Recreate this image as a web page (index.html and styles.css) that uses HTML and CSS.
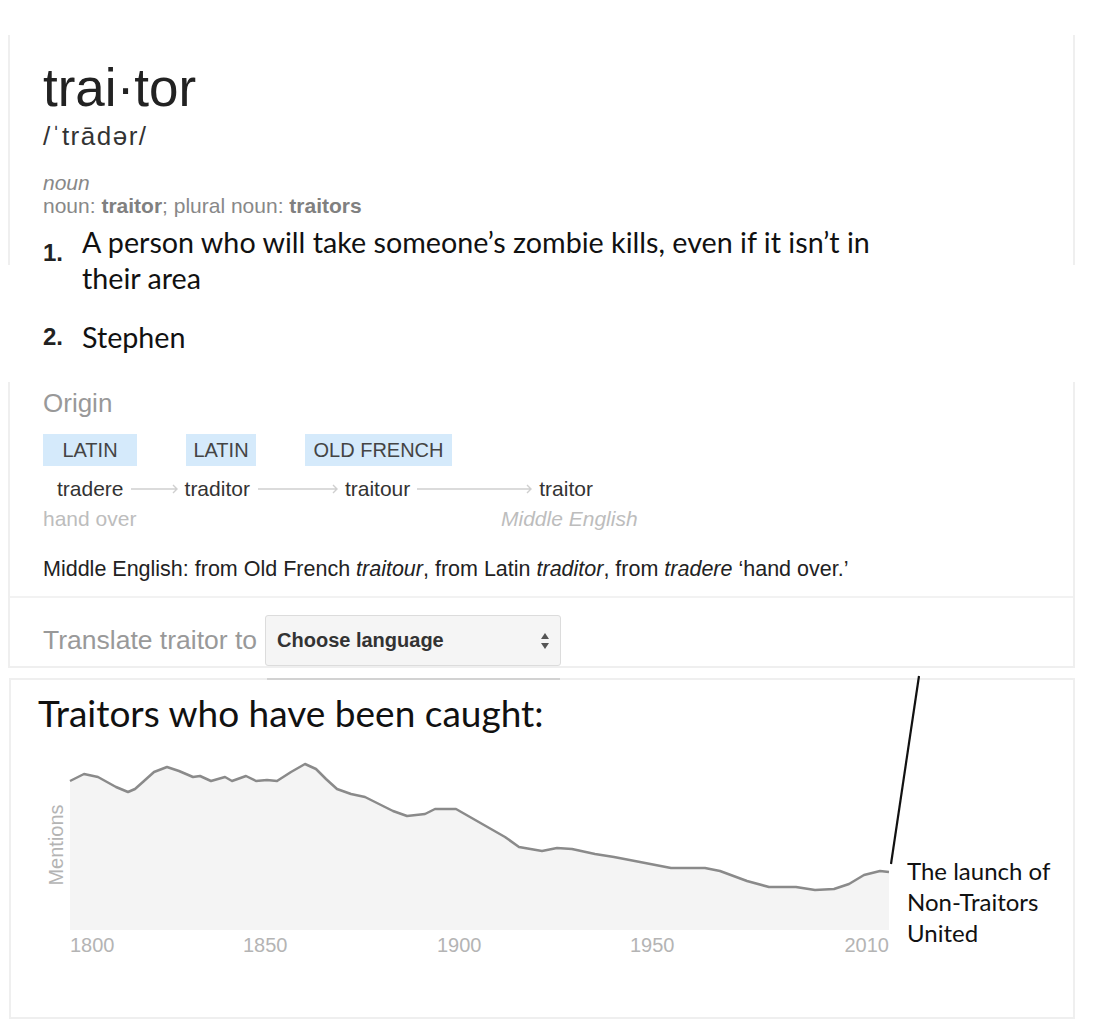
FILE: index.html
```html
<!DOCTYPE html>
<html>
    <head>
        <meta charset="utf-8">
        <title>traitor</title>
        <link rel="stylesheet" href="styles.css">
    </head>
    <body>
        <div class="page">
            <!-- Headword, pronunciation and senses -->
            <section class="entry">
                <h1 class="headword">trai·tor</h1>
                <div class="phonetic">/ˈtrādər/</div>
                <div class="pos">noun</div>
                <div class="forms">noun: <b>traitor</b>; plural noun: <b>traitors</b></div>
                <ol class="senses">
                    <li><span class="num">1.</span><span class="sense">A person who will take someone’s zombie kills, even if it isn’t in their area</span></li>
                    <li><span class="num">2.</span><span class="sense">Stephen</span></li>
                </ol>
            </section>

            <!-- Origin + translate -->
            <section class="origin-card">
                <div class="origin">
                    <h2>Origin</h2>
                    <div class="etym">
                        <span class="tag">LATIN</span>
                        <span class="tag">LATIN</span>
                        <span class="tag">OLD FRENCH</span>
                        <div class="etym-words">
                            <span class="word">tradere</span>
                            <svg class="arrow a1" viewBox="0 0 47 10"><path d="M0 5H46M42 1L46 5L42 9"/></svg>
                            <span class="word">traditor</span>
                            <svg class="arrow a2" viewBox="0 0 80 10"><path d="M0 5H79M75 1L79 5L75 9"/></svg>
                            <span class="word">traitour</span>
                            <svg class="arrow a3" viewBox="0 0 115 10"><path d="M0 5H114M110 1L114 5L110 9"/></svg>
                            <span class="word">traitor</span>
                        </div>
                        <span class="gloss">hand over</span>
                        <span class="gloss lang">Middle English</span>
                    </div>
                    <p class="etym-note">Middle English: from Old French <i>traitour</i>, from Latin <i>traditor</i>, from <i>tradere</i> ‘hand over.’</p>
                </div>
                <div class="translate">
                    <span class="translate-label">Translate traitor to</span>
                    <div class="lang-select">
                        <span>Choose language</span>
                        <svg class="updown" viewBox="0 0 10 18"><path d="M5 1L9 7H1Z"/><path d="M5 17L9 11H1Z"/></svg>
                    </div>
                </div>
            </section>

            <!-- Usage over time -->
            <section class="chart-card">
                <h2 class="chart-title">Traitors who have been caught:</h2>
                <svg class="chart" width="1062" height="240" viewBox="11 735 1062 240">
                    <path class="area" d="M70 782L84 775L98 778L116 788L128 793L135 790L144 782L154 773L167 768L179 772L193 778L200 777L211 782L225 778L232 782L246 777L256 782L267 781L277 782L291 773L305 765L316 770L326 780L337 790L351 795L365 798L379 805L393 812L407 817L425 815L435 810L456 810L470 818L491 830L505 838L519 848L542 852L557 849L572 850L595 855L614 858L640 863L671 869L705 869L720 872L747 882L769 888L796 888L815 891L834 890L849 885L864 876L880 872L889 873L889 931L70 931Z"/>
                    <path class="line" d="M70 782L84 775L98 778L116 788L128 793L135 790L144 782L154 773L167 768L179 772L193 778L200 777L211 782L225 778L232 782L246 777L256 782L267 781L277 782L291 773L305 765L316 770L326 780L337 790L351 795L365 798L379 805L393 812L407 817L425 815L435 810L456 810L470 818L491 830L505 838L519 848L542 852L557 849L572 850L595 855L614 858L640 863L671 869L705 869L720 872L747 882L769 888L796 888L815 891L834 890L849 885L864 876L880 872L889 873"/>
                    <text class="axis-title" transform="translate(63 846) rotate(-90)">Mentions</text>
                    <text class="tick" x="70" y="953">1800</text>
                    <text class="tick" x="243" y="953">1850</text>
                    <text class="tick" x="437" y="953">1900</text>
                    <text class="tick" x="630" y="953">1950</text>
                    <text class="tick end" x="889" y="953">2010</text>
                </svg>
                <svg class="callout-line" width="45" height="195" viewBox="880 675 45 195"><path d="M919 677L891 865"/></svg>
                <div class="callout">The launch of<br>Non-Traitors<br>United</div>
            </section>
        </div>
    </body>
</html>
```

FILE: styles.css
```css
body {
    margin: 0;
    background: #fff;
    font-family: "Liberation Sans", Arial, sans-serif;
    color: #222;
}

.page {
    width: 1067px;
    margin-left: 8px;
    padding-top: 35px;
}

/* top block only keeps its side rules for the first 230px */
.entry {
    padding: 26px 35px 0;
    background:
        linear-gradient(#efefef, #efefef) left top / 2px 230px no-repeat,
        linear-gradient(#efefef, #efefef) right top / 2px 230px no-repeat;
}

.headword {
    margin: 0;
    font-size: 53px;
    font-weight: 400;
    line-height: 53px;
    color: #222;
}

.phonetic {
    margin-top: 7px;
    font-size: 26px;
    line-height: 30px;
    letter-spacing: 1.5px;
    color: #333;
}

.pos {
    margin-top: 20px;
    font-size: 21px;
    line-height: 23px;
    font-style: italic;
    color: #888;
}

.forms {
    margin-top: 0;
    font-size: 21px;
    line-height: 23px;
    color: #888;
}

.forms b {
    color: #808080;
}

.senses {
    list-style: none;
    margin: 7px 0 0;
    padding: 0;
    font-family: Lato, "Open Sans", sans-serif;
    font-size: 28.7px;
    line-height: 36px;
    color: #111;
}

.senses li {
    display: flex;
}

.senses li + li {
    margin-top: 23px;
}

.num {
    flex: none;
    width: 39px;
    font-family: "Liberation Sans", Arial, sans-serif;
    font-weight: bold;
    font-size: 24px;
    color: #222;
}

.senses li:first-child .num {
    padding-top: 11px;
}

.sense {
    max-width: 815px;
}

/* Origin card */
.origin-card {
    margin-top: 27px;
    border: 2px solid #efefef;
    border-top: 0;
}

.origin {
    padding: 6px 33px 12px;
}

.origin h2 {
    margin: 0;
    font-size: 26px;
    font-weight: 400;
    line-height: 30px;
    color: #999;
}

.etym {
    display: grid;
    grid-template-columns: 94px 70px 147px 130px;
    column-gap: 49px;
    margin-top: 16px;
    font-size: 20px;
}

.tag {
    background: #d5eafb;
    text-align: center;
    line-height: 32px;
    color: #444;
}

.etym-words {
    grid-column: 1 / -1;
    display: flex;
    align-items: center;
    margin-top: 8px;
    padding-left: 14px;
    font-size: 21px;
    line-height: 30px;
    color: #333;
}

.arrow {
    height: 10px;
    margin: 0 7px;
    fill: none;
    stroke: #cfcfcf;
    stroke-width: 1.4;
}

.a1 { width: 47px; }
.a2 { width: 80px; margin-left: 8px; }
.a3 { width: 115px; }

.gloss {
    grid-row: 3;
    grid-column: 1;
    font-size: 21px;
    line-height: 30px;
    white-space: nowrap;
    color: #bdbdbd;
}

.gloss.lang {
    grid-column: 4;
    text-align: center;
    font-style: italic;
}

.etym-note {
    margin: 20px 0 0;
    font-size: 21.5px;
    line-height: 30px;
    color: #222;
}

.translate {
    display: flex;
    align-items: center;
    border-top: 2px solid #f2f2f2;
    padding: 17px 0 0 33px;
}

.translate-label {
    margin-right: 8px;
    font-size: 26.5px;
    color: #999;
}

.lang-select {
    box-sizing: border-box;
    width: 296px;
    height: 51px;
    display: flex;
    align-items: center;
    justify-content: space-between;
    padding: 0 10px 0 11px;
    background: #f5f5f5;
    border: 1px solid #dcdcdc;
    border-radius: 3px;
    font-size: 20px;
    font-weight: bold;
    color: #333;
}

.updown {
    width: 10px;
    height: 18px;
    fill: #555;
}

/* Chart card */
.chart-card {
    position: relative;
    box-sizing: border-box;
    height: 341px;
    margin: 10px 0 0 1px;
    padding-top: 2px;
    border: 2px solid #efefef;
    border-top: 0;
    background: linear-gradient(to right, #efefef 256px, #d2d2d2 256px 549px, #efefef 549px) 0 0 / 100% 2px no-repeat;
}

.chart-title {
    margin: 13px 0 1px;
    padding-left: 27px;
    font-family: Lato, "Open Sans", sans-serif;
    font-size: 37px;
    font-weight: 400;
    line-height: 40px;
    color: #111;
}

.chart {
    display: block;
}

.chart .area {
    fill: #f4f4f4;
}

.chart .line {
    fill: none;
    stroke: #8a8a8a;
    stroke-width: 2.5;
    stroke-linejoin: round;
}

.chart text {
    font-family: "Liberation Sans", Arial, sans-serif;
    font-size: 20px;
    fill: #b4b4b4;
}

.chart .axis-title {
    text-anchor: middle;
}

.chart .end {
    text-anchor: end;
}

.callout-line {
    position: absolute;
    left: 869px;
    top: -4px;
    fill: none;
    stroke: #111;
    stroke-width: 2.2;
}

.callout {
    position: absolute;
    left: 896px;
    top: 177px;
    font-family: Lato, "Open Sans", sans-serif;
    font-size: 24px;
    line-height: 31px;
    color: #111;
}
```
